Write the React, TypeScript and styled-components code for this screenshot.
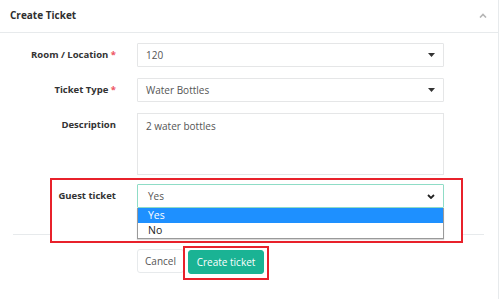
import * as React from 'react'
import styled, {createGlobalStyle} from 'styled-components'

const Global = createGlobalStyle`
  body {
    margin: 0;
    background: #fff;
    font-family: "Open Sans", "Liberation Sans", sans-serif;
    color: #676a6c;
  }
`

const Panel = styled.div`
  width: 499px;
  height: 299px;
  box-sizing: border-box;
  border-right: 1px solid #e7eaec;
  background: #fff;
`

const Header = styled.div`
  height: 33px;
  box-sizing: border-box;
  border-bottom: 1px solid #e7eaec;
  display: flex;
  align-items: center;
  justify-content: space-between;
  padding: 0 11px 2px 10px;
  h5{
    margin: 0;
    font-size: 10px;
    font-weight: 700;
    color: #2f2f2f;
  }
`

const Body = styled.div`
  padding-top: 10px;
  display: flex;
  flex-direction: column;
`

const Row = styled.div<{labelWidth?: number}>`
  display: grid;
  grid-template-columns: ${p => p.labelWidth ?? 116}px 307px;
  column-gap: 21px;
  align-items: start;
  margin-bottom: 11px;
`

const Label = styled.label`
  text-align: right;
  font-size: 9.5px;
  font-weight: 700;
  color: #333;
  padding-top: 5px;
  white-space: nowrap;
  .req{
    color: #ed5565;
  }
`

const Field = styled.div<{focused?: boolean}>`
  height: 24px;
  box-sizing: border-box;
  border: 1px solid ${p => p.focused ? '#8fdcc6' : '#e5e6e7'};
  border-radius: 1px;
  display: flex;
  align-items: center;
  justify-content: space-between;
  padding: 0 8px 0 ${p => p.focused ? 10 : 8}px;
  font-size: 10px;
  color: #555;
`

const TextArea = styled.div`
  height: 62px;
  box-sizing: border-box;
  border: 1px solid #e5e6e7;
  padding: 5px 8px;
  font-size: 10px;
  color: #555;
`

const Highlight = styled.div<{pad: string}>`
  position: relative;
  z-index: 1;
  background: #fff;
  border: 2px solid #e8212b;
  padding: ${p => p.pad};
`

const GuestBox = styled(Highlight)`
  margin: -8px 0 0 50px;
  width: 413px;
  box-sizing: border-box;
  & > ${Row}{
    margin-bottom: 0;
  }
`

const SelectCol = styled.div`
  display: flex;
  flex-direction: column;
`

const ListBox = styled.div`
  border: 1px solid #9a9a9a;
  border-top: none;
  box-shadow: 0 1px 1px rgba(0,0,0,0.15);
`

const Option = styled.div<{active?: boolean}>`
  height: 15px;
  line-height: 15px;
  padding-left: 10px;
  font-size: 10.5px;
  background: ${p => p.active ? '#1e90ff' : '#fff'};
  color: ${p => p.active ? '#fff' : '#222'};
`

const Separator = styled.div`
  height: 1px;
  background: #e7eaec;
  margin: -9px 14px 0 13px;
`

const Actions = styled.div`
  display: flex;
  align-items: flex-start;
  padding-left: 137px;
  margin-top: 11px;
`

const Button = styled.button<{primary?: boolean}>`
  height: 24px;
  box-sizing: border-box;
  font-family: inherit;
  font-size: 10px;
  white-space: nowrap;
  border-radius: 3px;
  padding: 0;
  border: 1px solid ${p => p.primary ? '#1ab394' : '#e7eaec'};
  background: ${p => p.primary ? '#1ab394' : '#fff'};
  color: ${p => p.primary ? '#fff' : '#555'};
`

const CancelButton = styled(Button)`
  margin-top: 3px;
  width: 47px;
`

const CreateButton = styled(Button)`
  width: 76px;
`

const ButtonBox = styled(Highlight)`
  margin-left: -1px;
`

function Caret() {
  return (
    <svg width="7" height="4" viewBox="0 0 7 4">
      <path d="M0 0h7L3.5 4z" fill="#333"/>
    </svg>
  )
}

function Chevron(props: {up?: boolean, color: string, w: number}) {
  return (
    <svg width="8" height="5" viewBox="0 0 8 5">
      <polyline points={props.up ? '1,4.5 4,1.5 7,4.5' : '1,1 4,4 7,1'}
                fill="none" stroke={props.color} strokeWidth={props.w}/>
    </svg>
  )
}

export default function App() {
  return (
    <Panel>
      <Global/>
      <Header>
        <h5>Create Ticket</h5>
        <Chevron up color="#b5b5b5" w={1.6}/>
      </Header>
      <Body>
        <Row>
          <Label>Room / Location <span className="req">*</span></Label>
          <Field><span>120</span><Caret/></Field>
        </Row>
        <Row>
          <Label>Ticket Type <span className="req">*</span></Label>
          <Field><span>Water Bottles</span><Caret/></Field>
        </Row>
        <Row>
          <Label>Description</Label>
          <TextArea>2 water bottles</TextArea>
        </Row>
        <GuestBox pad="4px 0 2px 0">
          <Row labelWidth={64}>
            <Label>Guest ticket</Label>
            <SelectCol>
              <Field focused><span>Yes</span><Chevron color="#222" w={1.8}/></Field>
              <ListBox>
                <Option active>Yes</Option>
                <Option>No</Option>
              </ListBox>
            </SelectCol>
          </Row>
        </GuestBox>
        <Separator/>
        <Actions>
          <CancelButton>Cancel</CancelButton>
          <ButtonBox pad="1px 3px 4px 3px">
            <CreateButton primary>Create ticket</CreateButton>
          </ButtonBox>
        </Actions>
      </Body>
    </Panel>
  )
}
